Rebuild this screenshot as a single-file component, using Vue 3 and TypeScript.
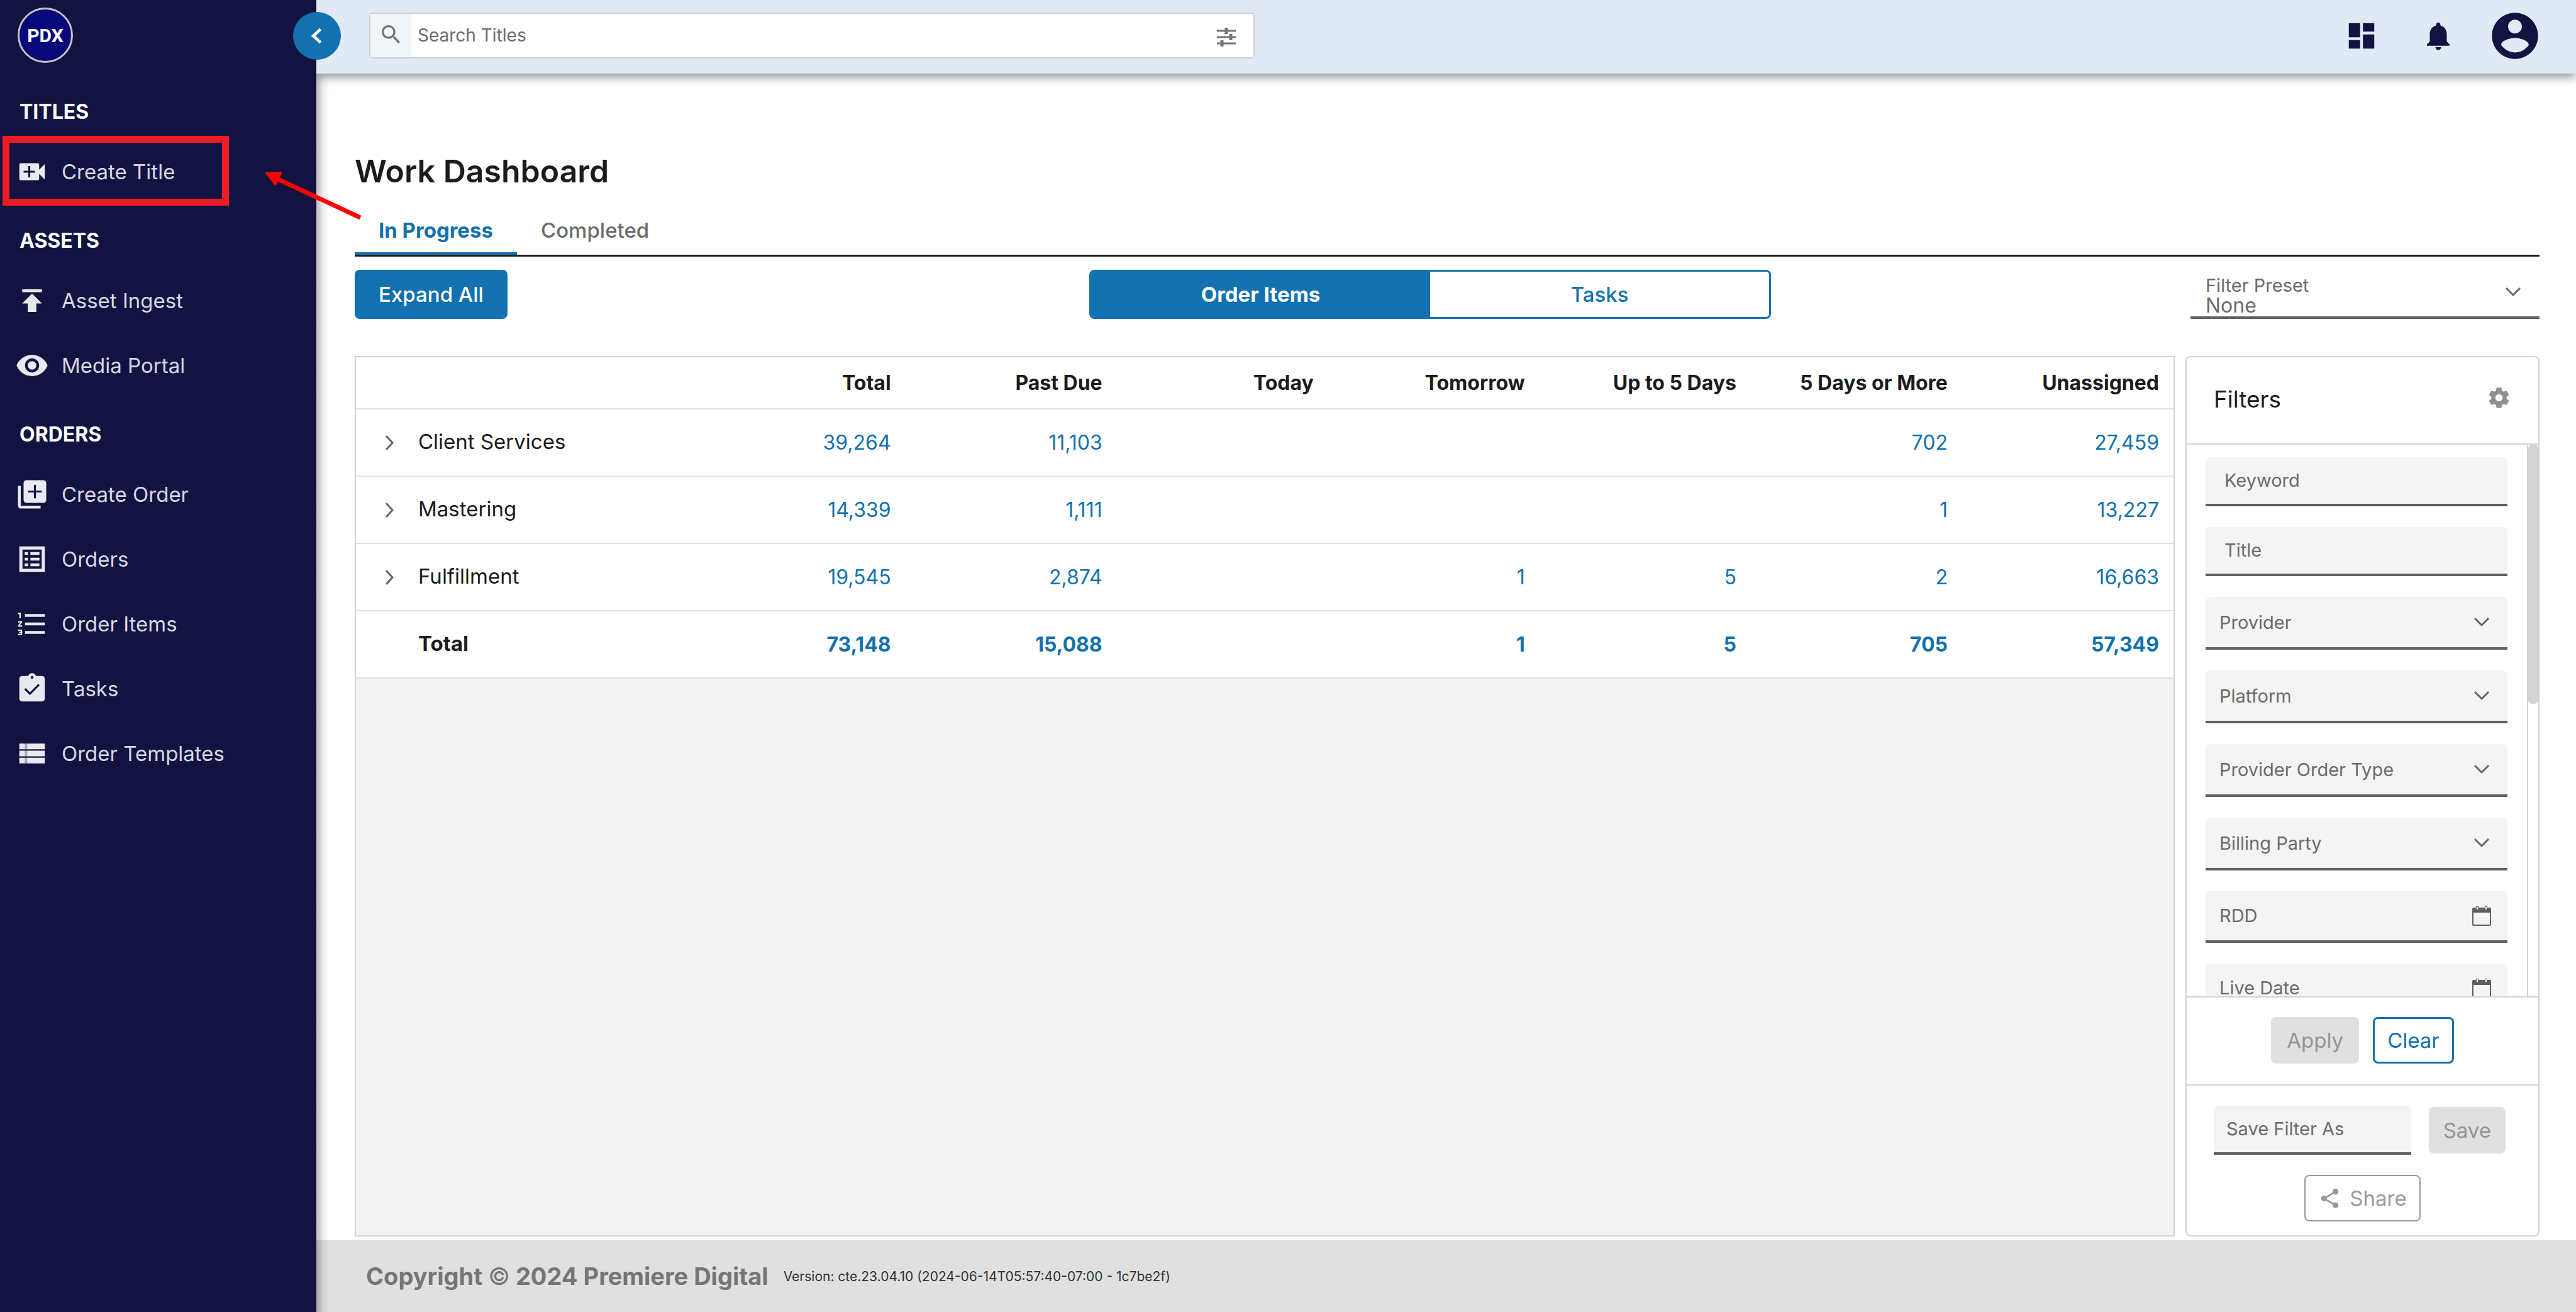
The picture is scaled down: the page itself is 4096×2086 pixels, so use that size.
<script setup lang="ts">
import { ref } from 'vue'

interface NavItem {
  label: string
  icon: string
  faint?: string
  flagged?: boolean
}

interface NavGroup {
  title: string
  items: NavItem[]
}

interface WorkRow {
  label: string
  values: string[]
}

interface FilterField {
  label: string
  kind: 'text' | 'select' | 'date'
}

const navGroups: NavGroup[] = [
  {
    title: 'TITLES',
    items: [
      {
        label: 'Create Title',
        flagged: true,
        icon: 'M17 10.5V7c0-.55-.45-1-1-1H4c-.55 0-1 .45-1 1v10c0 .55.45 1 1 1h12c.55 0 1-.45 1-1v-3.500l4 4v-11l-4 4zM14 12.700h-3.300V16H9.300v-3.300H6v-1.400h3.300V8h1.400v3.300H14v1.400z',
      },
    ],
  },
  {
    title: 'ASSETS',
    items: [
      { label: 'Asset Ingest', icon: 'M5 4v2h14V4H5zm0 10h4v6h6v-6h4l-7-7-7 7z' },
      {
        label: 'Media Portal',
        icon: 'M12 4.500C7 4.500 2.730 7.610 1 12c1.730 4.390 6 7.500 11 7.500s9.270-3.110 11-7.500c-1.730-4.390-6-7.500-11-7.500zM12 17c-2.760 0-5-2.240-5-5s2.240-5 5-5 5 2.240 5 5-2.240 5-5 5zm0-8c-1.660 0-3 1.340-3 3s1.340 3 3 3 3-1.340 3-3-1.340-3-3-3z',
      },
    ],
  },
  {
    title: 'ORDERS',
    items: [
      {
        label: 'Create Order',
        icon: 'M4 6H2v14c0 1.100.900 2 2 2h14v-2H4V6zm16-4H8c-1.100 0-2 .900-2 2v12c0 1.100.900 2 2 2h12c1.100 0 2-.900 2-2V4c0-1.100-.900-2-2-2zm-1.200 8.700h-4.100v4.100h-1.400v-4.100H9.200V9.300h4.100V5.200h1.400v4.100h4.100v1.400z',
      },
      {
        label: 'Orders',
        icon: 'M3 3h18v18H3V3zm2.200 2.200v13.600h13.600V5.200H5.200zM6.800 7h2.400v2H6.800V7zm4 0h6.400v2h-6.400V7zm-4 4h2.400v2H6.800v-2zm4 0h6.400v2h-6.400v-2zm-4 4h2.400v2H6.800v-2zm4 0h6.400v2h-6.400v-2z',
      },
      {
        label: 'Order Items',
        icon: 'M2 17h2v.500H3v1h1v.500H2v1h3v-4H2v1zm1-9h1V4H2v1h1v3zm-1 3h1.800L2 13.100v.900h3v-1H3.200L5 10.900V10H2v1zm5-6v2h14V5H7zm0 14h14v-2H7v2zm0-6h14v-2H7v2z',
      },
      {
        label: 'Tasks',
        icon: 'M19 3h-4.180C14.400 1.840 13.300 1 12 1c-1.300 0-2.400.840-2.820 2H5c-1.100 0-2 .900-2 2v14c0 1.100.900 2 2 2h14c1.100 0 2-.900 2-2V5c0-1.100-.900-2-2-2zm-7 0c.550 0 1 .450 1 1s-.450 1-1 1-1-.450-1-1 .450-1 1-1zm-1.500 13.500l-4-4 1-1 3 3 5.900-5.900 1 1-6.900 6.900z',
      },
      {
        label: 'Order Templates',
        icon: 'M3 5h4v4H3zM8.500 5H21v4H8.500zM3 10h4v4H3zM8.500 10H21v4H8.500zM3 15h4v4H3zM8.500 15H21v4H8.500z',
        faint: 'M7 5h1.500v4H7zM7 10h1.500v4H7zM7 15h1.500v4H7z',
      },
    ],
  },
]

const columns: string[] = [
  'Total',
  'Past Due',
  'Today',
  'Tomorrow',
  'Up to 5 Days',
  '5 Days or More',
  'Unassigned',
]

const rows: WorkRow[] = [
  { label: 'Client Services', values: ['39,264', '11,103', '', '', '', '702', '27,459'] },
  { label: 'Mastering', values: ['14,339', '1,111', '', '', '', '1', '13,227'] },
  { label: 'Fulfillment', values: ['19,545', '2,874', '', '1', '5', '2', '16,663'] },
]

const totals: WorkRow = {
  label: 'Total',
  values: ['73,148', '15,088', '', '1', '5', '705', '57,349'],
}

const filterFields: FilterField[] = [
  { label: 'Keyword', kind: 'text' },
  { label: 'Title', kind: 'text' },
  { label: 'Provider', kind: 'select' },
  { label: 'Platform', kind: 'select' },
  { label: 'Provider Order Type', kind: 'select' },
  { label: 'Billing Party', kind: 'select' },
  { label: 'RDD', kind: 'date' },
  { label: 'Live Date', kind: 'date' },
]

const activeTab = ref<'progress' | 'completed'>('progress')
const activeView = ref<'items' | 'tasks'>('items')
</script>

<template>
  <div class="app">
    <aside class="sidebar">
      <a class="logo" href="#" aria-label="PDX home">PDX</a>
      <nav class="nav">
        <section v-for="group in navGroups" :key="group.title">
          <h2 class="nav-title">{{ group.title }}</h2>
          <ul class="nav-list">
            <li v-for="item in group.items" :key="item.label">
              <a class="nav-link" href="#">
                <svg class="nav-icon" viewBox="0 0 24 24" aria-hidden="true">
                  <path :d="item.icon" fill-rule="evenodd" />
                  <path v-if="item.faint" :d="item.faint" opacity="0.7" />
                </svg>
                <span>{{ item.label }}</span>
              </a>
              <span v-if="item.flagged" class="callout"></span>
            </li>
          </ul>
        </section>
      </nav>
      <button class="collapse" type="button" aria-label="Collapse menu">
        <svg viewBox="0 0 24 24" aria-hidden="true"><path d="M17 3L7 12l10 9" /></svg>
      </button>
      <svg class="arrow" viewBox="0 0 156 80" aria-hidden="true">
        <path d="M20 12L153 74" fill="none" stroke="#ff0000" stroke-width="7" />
        <path d="M1 2L29 1L18 24Z" fill="#ff0000" />
      </svg>
    </aside>

    <div class="page">
      <header class="topbar">
        <div class="search">
          <label class="search-icon" for="search">
            <svg viewBox="0 0 24 24" aria-label="Search">
              <path d="M15.500 14h-.790l-.280-.270C15.410 12.590 16 11.110 16 9.500 16 5.910 13.090 3 9.500 3S3 5.910 3 9.500 5.910 16 9.500 16c1.610 0 3.090-.590 4.230-1.570l.270.280v.790l5 4.990L20.490 19l-4.990-5zm-6 0C7.010 14 5 11.990 5 9.500S7.010 5 9.500 5 14 7.010 14 9.500 11.990 14 9.500 14z" />
            </svg>
          </label>
          <input id="search" class="search-input" type="text" placeholder="Search Titles" />
          <button class="tune" type="button" aria-label="Search options">
            <svg viewBox="0 0 30 30" aria-hidden="true">
              <path d="M0 5h30M0 15h30M0 25h30" stroke-width="3" />
              <path d="M15 0v10M22 10v10M8 20v10" stroke-width="5" />
            </svg>
          </button>
        </div>
        <div class="actions">
          <button type="button" aria-label="Dashboard">
            <svg class="action-icon" viewBox="0 0 24 24" aria-hidden="true">
              <path d="M3 13h8V3H3v10zm0 8h8v-6H3v6zm10 0h8V11h-8v10zm0-18v6h8V3h-8z" />
            </svg>
          </button>
          <button type="button" aria-label="Notifications">
            <svg class="action-icon" viewBox="0 0 24 24" aria-hidden="true">
              <path d="M12 22c1.100 0 2-.900 2-2h-4c0 1.100.890 2 2 2zm6-6v-5c0-3.070-1.640-5.640-4.500-6.320V4c0-.830-.670-1.500-1.500-1.500s-1.500.670-1.500 1.500v.680C7.630 5.360 6 7.920 6 11v5l-2 2v1h16v-1l-2-2z" />
            </svg>
          </button>
          <button type="button" aria-label="Account">
            <svg class="account-icon" viewBox="0 0 24 24" aria-hidden="true">
              <path d="M12 2C6.480 2 2 6.480 2 12s4.480 10 10 10 10-4.480 10-10S17.520 2 12 2zm0 3c1.660 0 3 1.340 3 3s-1.340 3-3 3-3-1.340-3-3 1.340-3 3-3zm0 14.200c-2.500 0-4.710-1.280-6-3.220.030-1.990 4-3.080 6-3.080 1.990 0 5.970 1.090 6 3.080-1.290 1.940-3.500 3.220-6 3.220z" />
            </svg>
          </button>
        </div>
      </header>

      <main class="content">
        <h1 class="page-title">Work Dashboard</h1>
        <div class="tabs" role="tablist">
          <button
            class="tab"
            :class="{ active: activeTab === 'progress' }"
            type="button"
            role="tab"
            @click="activeTab = 'progress'"
          >
            In Progress
          </button>
          <button
            class="tab"
            :class="{ active: activeTab === 'completed' }"
            type="button"
            role="tab"
            @click="activeTab = 'completed'"
          >
            Completed
          </button>
        </div>

        <div class="toolbar">
          <button class="expand" type="button">Expand All</button>
          <div class="toggle">
            <button
              :class="{ active: activeView === 'items' }"
              type="button"
              @click="activeView = 'items'"
            >
              Order Items
            </button>
            <button
              :class="{ active: activeView === 'tasks' }"
              type="button"
              @click="activeView = 'tasks'"
            >
              Tasks
            </button>
          </div>
          <div class="preset">
            <label for="preset">Filter Preset</label>
            <select id="preset">
              <option>None</option>
            </select>
            <svg class="chevron" viewBox="0 0 24 24" aria-hidden="true">
              <path d="M1 6l11 11L23 6" />
            </svg>
          </div>
        </div>

        <div class="panels">
          <section class="grid-panel">
            <table class="work">
              <thead>
                <tr>
                  <th class="name-col" aria-label="Group"></th>
                  <th v-for="column in columns" :key="column" scope="col">{{ column }}</th>
                </tr>
              </thead>
              <tbody>
                <tr v-for="row in rows" :key="row.label">
                  <td class="name-col">
                    <button class="row-toggle" type="button">
                      <svg class="chevron" viewBox="0 0 24 24" aria-hidden="true">
                        <path d="M7 1l10 11L7 23" />
                      </svg>
                      <span class="row-label">{{ row.label }}</span>
                    </button>
                  </td>
                  <td v-for="(value, index) in row.values" :key="index">
                    <a v-if="value" href="#">{{ value }}</a>
                  </td>
                </tr>
                <tr class="totals">
                  <td class="name-col">
                    <div class="row-label total-label">{{ totals.label }}</div>
                  </td>
                  <td v-for="(value, index) in totals.values" :key="index">
                    <a v-if="value" href="#">{{ value }}</a>
                  </td>
                </tr>
              </tbody>
            </table>
          </section>

          <section class="filters">
            <div class="filters-head">
              <h2>Filters</h2>
              <button class="gear" type="button" aria-label="Filter settings">
                <svg viewBox="0 0 24 24" aria-hidden="true">
                  <path d="M19.430 12.980c.040-.320.070-.640.070-.980s-.030-.660-.070-.980l2.110-1.650c.190-.150.240-.420.120-.640l-2-3.460c-.120-.220-.390-.300-.610-.220l-2.490 1c-.520-.400-1.080-.730-1.690-.980l-.380-2.650C14.460 2.180 14.250 2 14 2h-4c-.250 0-.460.180-.490.420l-.380 2.650c-.610.250-1.170.590-1.690.980l-2.490-1c-.230-.090-.490 0-.610.220l-2 3.460c-.130.220-.070.490.120.640l2.110 1.650c-.040.320-.070.650-.070.980s.030.660.070.980l-2.110 1.650c-.190.150-.240.420-.120.640l2 3.460c.120.220.390.300.610.220l2.490-1c.520.400 1.080.730 1.690.980l.380 2.650c.030.240.240.420.490.420h4c.250 0 .460-.180.490-.420l.380-2.650c.610-.250 1.170-.590 1.690-.980l2.490 1c.230.090.490 0 .610-.220l2-3.460c.120-.220.070-.490-.120-.640l-2.110-1.650zM12 15.500c-1.930 0-3.500-1.570-3.500-3.500s1.570-3.500 3.500-3.500 3.500 1.570 3.500 3.500-1.570 3.500-3.500 3.500z" />
                </svg>
              </button>
            </div>

            <div class="filters-body">
              <div class="fields">
                <div
                  v-for="field in filterFields"
                  :key="field.label"
                  class="field"
                  :class="field.kind"
                >
                  <select v-if="field.kind === 'select'" :aria-label="field.label">
                    <option>{{ field.label }}</option>
                  </select>
                  <input v-else type="text" :placeholder="field.label" :aria-label="field.label" />
                  <svg
                    v-if="field.kind === 'select'"
                    class="chevron"
                    viewBox="0 0 24 24"
                    aria-hidden="true"
                  >
                    <path d="M1 6l11 11L23 6" />
                  </svg>
                  <svg
                    v-if="field.kind === 'date'"
                    class="calendar"
                    viewBox="0 0 30 32"
                    aria-hidden="true"
                  >
                    <path
                      fill-rule="evenodd"
                      d="M2 3H6V1H10V3H20V1H24V3H28Q30 3 30 5V30Q30 32 28 32H2Q0 32 0 30V5Q0 3 2 3ZM2 11V30H28V11ZM7 2V6H9V2ZM21 2V6H23V2Z"
                    />
                  </svg>
                </div>
              </div>
              <div class="track"><div class="thumb"></div></div>
            </div>

            <div class="filters-actions">
              <button class="btn muted" type="button" disabled>Apply</button>
              <button class="btn outline" type="button">Clear</button>
            </div>

            <div class="filters-save">
              <div class="save-row">
                <input type="text" placeholder="Save Filter As" aria-label="Save Filter As" />
                <button class="btn muted" type="button" disabled>Save</button>
              </div>
              <button class="btn share" type="button" disabled>
                <svg viewBox="0 0 24 24" aria-hidden="true">
                  <path d="M18 16.080c-.760 0-1.440.300-1.960.770L8.910 12.700c.050-.230.090-.460.090-.700s-.040-.470-.090-.700l7.050-4.110c.540.500 1.250.810 2.040.810 1.660 0 3-1.340 3-3s-1.340-3-3-3-3 1.340-3 3c0 .240.040.470.090.700L8.040 9.810C7.500 9.310 6.790 9 6 9c-1.660 0-3 1.340-3 3s1.340 3 3 3c.790 0 1.500-.310 2.040-.810l7.120 4.160c-.050.210-.080.430-.080.650 0 1.610 1.310 2.920 2.920 2.920s2.920-1.310 2.920-2.920-1.310-2.920-2.920-2.920z" />
                </svg>
                Share
              </button>
            </div>
          </section>
        </div>
      </main>

      <footer class="footer">
        <strong>Copyright <span class="mark">©</span> 2024 Premiere Digital</strong>
        <span>Version: cte.23.04.10 (2024-06-14T05:57:40-07:00 - 1c7be2f)</span>
      </footer>
    </div>
  </div>
</template>

<style>
body {
  margin: 0;
  background: #ffffff;
}
</style>

<style scoped>
.app {
  --blue: #1271ae;
  --navy: #131342;
  --line: #d3d3d3;
  --ink: #1b1b1b;
  --gray: #6b6b6b;
  display: grid;
  grid-template-columns: 503px minmax(0, 1fr);
  height: 100vh;
  overflow: hidden;
  color: var(--ink);
  font-family: Inter, "Liberation Sans", sans-serif;
  font-size: 33px;
}

.app * {
  box-sizing: border-box;
}

button,
input,
select {
  margin: 0;
  padding: 0;
  border: 0;
  border-radius: 0;
  background: none;
  color: inherit;
  font: inherit;
  appearance: none;
  outline: none;
}

a {
  color: inherit;
  text-decoration: none;
}

svg {
  display: block;
  flex: none;
}

/* Sidebar */
.sidebar {
  position: relative;
  z-index: 2;
  padding: 12px 0 0;
  background: var(--navy);
}

.sidebar::after {
  content: "";
  position: absolute;
  top: 117px;
  bottom: 0;
  left: 100%;
  width: 20px;
  background: linear-gradient(to right, rgba(0, 0, 0, 0.26), rgba(0, 0, 0, 0.06) 60%, transparent);
  pointer-events: none;
}

.logo {
  display: flex;
  align-items: center;
  justify-content: center;
  width: 88px;
  height: 88px;
  margin-left: 28px;
  border: 3px solid #c4c4c4;
  border-radius: 50%;
  background: #08087a;
  color: #ffffff;
  font-family: Roboto, "Liberation Sans", sans-serif;
  font-size: 30px;
  font-weight: 700;
}

.nav {
  padding-top: 19px;
}

.nav-title {
  height: 102px;
  margin: 0;
  padding: 15px 0 0 31px;
  color: #ffffff;
  font-size: 32px;
  font-weight: 700;
  line-height: 88px;
}

.nav-list {
  margin: 0;
  padding: 0;
  list-style: none;
}

.nav-list li {
  position: relative;
}

.nav-link {
  display: flex;
  align-items: center;
  gap: 20px;
  height: 103px;
  padding-left: 24px;
  color: #d8d8e2;
  font-size: 33px;
}

.nav-icon {
  width: 54px;
  height: 54px;
  fill: #e9e9ef;
}

.callout {
  position: absolute;
  top: -5px;
  left: 4px;
  width: 360px;
  height: 111px;
  border: 11px solid #ed1c24;
  pointer-events: none;
}

.collapse {
  position: absolute;
  z-index: 1;
  top: 19px;
  right: -39px;
  display: flex;
  align-items: center;
  justify-content: center;
  width: 76px;
  height: 76px;
  border-radius: 50%;
  background: var(--blue);
}

.collapse svg {
  width: 28px;
  height: 28px;
  fill: none;
  stroke: #ffffff;
  stroke-width: 4;
}

.arrow {
  position: absolute;
  z-index: 1;
  top: 272px;
  left: 420px;
  width: 156px;
  height: 80px;
  pointer-events: none;
}

/* Top bar */
.page {
  display: flex;
  flex-direction: column;
  min-width: 0;
  height: 100vh;
}

.topbar {
  position: relative;
  z-index: 1;
  display: flex;
  align-items: center;
  justify-content: space-between;
  height: 117px;
  flex: none;
  padding: 0 36px 4px 84px;
  background: #e0eaf4;
  box-shadow: 0 4px 16px rgba(0, 0, 0, 0.5);
}

.search {
  display: flex;
  width: 40.55%;
  height: 73px;
  border: 2px solid #cfcfcf;
  border-radius: 6px;
  background: #ffffff;
  overflow: hidden;
}

.search-icon {
  display: flex;
  align-items: center;
  justify-content: center;
  width: 65px;
  padding-bottom: 4px;
  background: #f0f5fa;
}

.search-icon svg {
  width: 40px;
  height: 40px;
  fill: #757575;
}

.search-input {
  flex: 1;
  min-width: 0;
  padding: 0 10px 2px;
  font-size: 28px;
}

input::placeholder {
  color: var(--gray);
  opacity: 1;
}

.tune {
  display: flex;
  align-items: center;
  justify-content: center;
  width: 86px;
  padding-top: 4px;
}

.tune svg {
  width: 30px;
  height: 30px;
  stroke: #757575;
}

.actions {
  display: flex;
}

.actions button {
  display: flex;
  align-items: center;
  justify-content: center;
  width: 122px;
  height: 88px;
}

.actions svg {
  fill: var(--navy);
}

.action-icon {
  width: 54px;
  height: 54px;
}

.account-icon {
  width: 88px;
  height: 88px;
}

/* Main area */
.content {
  display: flex;
  flex: 1;
  flex-direction: column;
  min-height: 0;
  padding: 127px 58px 6px 61px;
}

.page-title {
  margin: 0 0 30px;
  font-size: 50px;
  font-weight: 600;
  line-height: 56px;
}

.tabs {
  display: flex;
  border-bottom: 3px solid #1b1b1b;
}

.tab {
  height: 75px;
  padding: 0 38px;
  border-bottom: 4px solid transparent;
  color: var(--gray);
  font-weight: 500;
}

.tab.active {
  border-color: var(--blue);
  color: var(--blue);
  font-weight: 700;
}

.toolbar {
  display: grid;
  grid-template-columns: 1168fr 1084fr 1222fr;
  height: 78px;
  margin: 21px 0 59px;
}

.expand {
  justify-self: start;
  width: 243px;
  border-radius: 8px;
  background: var(--blue);
  color: #ffffff;
  font-weight: 500;
}

.toggle {
  display: grid;
  grid-template-columns: 1fr 1fr;
  border: 3px solid var(--blue);
  border-radius: 8px;
  overflow: hidden;
}

.toggle button {
  color: var(--blue);
  font-weight: 500;
}

.toggle button.active {
  background: var(--blue);
  color: #ffffff;
  font-weight: 700;
}

.preset {
  display: grid;
  grid-template-rows: 32px 32px;
  grid-template-columns: 1fr 24px;
  justify-self: end;
  width: 555px;
  padding: 9px 30px 0 24px;
  border-bottom: 4px solid #5f5f5f;
  color: var(--gray);
}

.preset label {
  font-size: 29px;
  line-height: 32px;
}

.preset select {
  grid-row: 2;
  font-size: 32px;
  line-height: 32px;
}

.preset .chevron {
  grid-row: 1 / 3;
  grid-column: 2;
  margin-top: 14px;
}

.chevron {
  width: 24px;
  height: 24px;
  fill: none;
  stroke: #666666;
  stroke-width: 3;
}

.panels {
  display: grid;
  flex: 1;
  grid-template-columns: minmax(0, 1fr) 563px;
  gap: 17px;
  min-height: 0;
}

/* Work table */
.grid-panel {
  border: 2px solid var(--line);
  background: #f3f3f3;
}

.work {
  width: 100%;
  background: #ffffff;
  border-collapse: collapse;
  table-layout: fixed;
}

.work th,
.work td {
  height: 107px;
  padding: 0 23px 0 0;
  border-bottom: 2px solid #e2e2e2;
  text-align: right;
}

.work th {
  height: 82px;
  font-size: 32px;
  font-weight: 700;
}

.work td {
  color: var(--blue);
  font-size: 32px;
}

.work .name-col {
  width: 18.6%;
  padding: 0;
  color: var(--ink);
  text-align: left;
}

.row-toggle {
  display: flex;
  align-items: center;
  gap: 34px;
  padding-left: 41px;
}

.row-label {
  padding-bottom: 4px;
  font-size: 33px;
}

.work .totals td {
  font-weight: 700;
}

.total-label {
  padding-left: 99px;
}

/* Filters */
.filters {
  display: flex;
  flex-direction: column;
  min-height: 0;
  border: 2px solid var(--line);
  border-radius: 8px;
}

.filters-head {
  display: flex;
  align-items: center;
  justify-content: space-between;
  height: 139px;
  padding: 0 43px;
  border-bottom: 2px solid var(--line);
}

.filters-head h2 {
  margin: 0;
  padding-bottom: 4px;
  font-size: 37px;
  font-weight: 400;
}

.gear {
  padding-bottom: 8px;
}

.gear svg {
  width: 39px;
  height: 39px;
  fill: #8f8f8f;
}

.filters-body {
  display: grid;
  flex: 1;
  grid-template-rows: minmax(0, 1fr);
  grid-template-columns: minmax(0, 1fr) 16px;
  min-height: 0;
  overflow: hidden;
}

.fields {
  display: flex;
  flex-direction: column;
  gap: 33px;
  padding: 20px 31px 0 30px;
  border-right: 2px solid var(--line);
}

.field {
  display: flex;
  flex: none;
  align-items: center;
  height: 78px;
  padding: 0 29px 0 22px;
  border-bottom: 4px solid #5f5f5f;
  border-radius: 8px 8px 0 0;
  background: #f4f4f4;
  color: var(--gray);
  font-size: 29px;
}

.field.text {
  padding-left: 30px;
}

.field.select {
  height: 84px;
}

.field.date {
  height: 82px;
  padding-right: 26px;
}

.field input,
.field select {
  flex: 1;
  min-width: 0;
  height: 100%;
}

.field input {
  padding-bottom: 2px;
}

.calendar {
  width: 30px;
  height: 32px;
  fill: #5f5f5f;
}

.thumb {
  height: 47%;
  border-radius: 6px;
  background: #d4d4d4;
}

.filters-actions {
  display: flex;
  align-items: center;
  justify-content: center;
  gap: 22px;
  height: 142px;
  padding-bottom: 2px;
  border-top: 2px solid var(--line);
  border-bottom: 2px solid var(--line);
}

.btn {
  height: 74px;
  padding: 0 25px;
  border-radius: 8px;
}

.btn.muted {
  background: #e0e0e0;
  color: #949494;
}

.btn.outline {
  padding: 0 20px;
  border: 3px solid var(--blue);
  color: var(--blue);
}

.btn.share {
  display: flex;
  align-items: center;
  gap: 13px;
  padding: 0 20px;
  border: 2px solid #999999;
  color: #999999;
}

.share svg {
  width: 37px;
  height: 37px;
  fill: #999999;
}

.filters-save {
  display: flex;
  flex-direction: column;
  align-items: center;
  gap: 32px;
  padding: 32px 0 22px;
}

.save-row {
  display: flex;
  align-items: center;
  align-self: stretch;
  gap: 28px;
  padding: 0 52px 0 43px;
}

.save-row .btn {
  padding: 0 23px;
}

.save-row input {
  flex: 1;
  min-width: 0;
  height: 78px;
  padding: 0 20px 2px;
  border-bottom: 4px solid #5f5f5f;
  border-radius: 8px 8px 0 0;
  background: #f4f4f4;
  font-size: 29px;
}

/* Footer */
.footer {
  display: flex;
  flex: none;
  align-items: center;
  gap: 24px;
  height: 114px;
  padding-left: 79px;
  background: #e0e0e0;
  color: #333333;
  font-size: 21px;
}

.footer strong {
  color: #757575;
  font-size: 38px;
}

.mark {
  font-weight: 400;
}
</style>
